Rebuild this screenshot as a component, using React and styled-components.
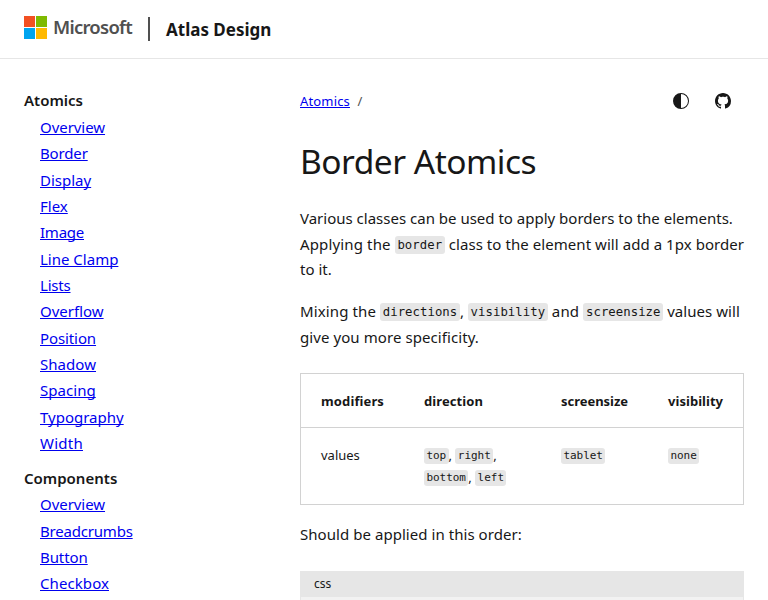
import React from "react";
import styled, { createGlobalStyle } from "styled-components";

const Global = createGlobalStyle`
  * { box-sizing: border-box; }
  html, body { margin: 0; height: 600px; overflow: hidden; background: #fff; }
  body { font-family: "Noto Sans", "Open Sans", sans-serif; font-size: 15px; color: #171717; }
`;

const Header = styled.header`
  display: flex;
  align-items: center;
  height: 59px;
  padding-left: 24px;
  border-bottom: 1px solid #e6e6e6;
`;
const Logo = styled.svg`
  width: 23px;
  height: 23px;
  margin-top: -4px;
`;
const Wordmark = styled.span`
  width: 80px;
  margin: -4px 15px 0 6px;
  font-size: 18.5px;
  font-weight: 600;
  line-height: 24px;
  letter-spacing: -0.75px;
  white-space: nowrap;
  color: #505050;
`;
const Divider = styled.span`
  width: 2px;
  height: 24px;
  background: #505050;
`;
const SiteName = styled.a`
  margin: 1px 0 0 16px;
  font-size: 17px;
  font-weight: 700;
  line-height: 24px;
  white-space: nowrap;
`;
const Layout = styled.div`
  display: grid;
  grid-template-columns: 276px 444px;
  height: 541px;
  padding-left: 24px;
  overflow: hidden;
`;
const Sidebar = styled.nav`
  padding-top: 28px;
`;
const Group = styled.section`
  margin-bottom: 7.8px;
`;
const GroupTitle = styled.h2`
  margin: 0;
  padding: 0.35px 0 0.15px;
  font-size: 15px;
  font-weight: 600;
  line-height: 26.5px;
`;
const NavList = styled.ul`
  margin: 0;
  padding: 0 0 0 16px;
  list-style: none;
`;
const NavItem = styled.li`
  height: 26.35px;
  line-height: 26.35px;
`;
const Link = styled.a`
  color: #0000ee;
  letter-spacing: ${(p) => p.$track || 0}px;
  text-decoration: underline 1px;
  text-underline-offset: 1px;
  text-decoration-skip-ink: none;
`;
const Main = styled.main`
  padding-top: 28px;
`;
const TopRow = styled.div`
  display: flex;
  align-items: center;
  height: 28px;
  font-size: 13px;
`;
const Slash = styled.span`
  flex: 1;
  margin-left: 7.5px;
  color: #505050;
`;
const ActionIcon = styled.svg`
  width: 16px;
  height: 16px;
  margin-right: ${(p) => p.$gap}px;
  fill: #171717;
`;
const Title = styled.h1`
  margin: 23px 0 0;
  font-size: 33.5px;
  font-weight: 400;
  line-height: 46px;
  letter-spacing: -0.5px;
  white-space: nowrap;
`;
const Paragraph = styled.p`
  margin: ${(p) => p.$top}px 0 0;
  line-height: 25.6px;
`;
const Line = styled.span`
  display: block;
  height: 25.6px;
  white-space: pre;
`;
const Run = styled.span`
  letter-spacing: ${(p) => p.$track || 0}px;
`;
const Code = styled.code`
  display: inline-block;
  height: ${(p) => (p.$small ? 16 : 18)}px;
  padding: 0 ${(p) => (p.$small ? 2.4 : 2.7)}px;
  border-radius: 3px;
  background: #e6e6e6;
  font-family: "DejaVu Sans Mono", monospace;
  font-size: ${(p) => (p.$small ? 11 : 12.3)}px;
  line-height: ${(p) => (p.$small ? 16 : 18)}px;
  letter-spacing: ${(p) => (p.$small ? -0.03 : 0.05)}px;
  vertical-align: 1px;
`;
const Table = styled.div`
  margin-top: 22.6px;
  border: 1px solid #d2d2d2;
  font-size: 13px;
`;
const TableRow = styled.div`
  display: grid;
  grid-template-columns: 103px 137px 107px 1fr;
  height: ${(p) => (p.$head ? 54 : 76)}px;
  padding: 16px 0 0 20px;
  border-bottom: ${(p) => (p.$head ? "1px solid #d2d2d2" : "0")};
  font-weight: ${(p) => (p.$head ? 700 : 400)};
  line-height: 22px;
`;
const CellLine = styled.span`
  display: block;
  height: 22px;
  white-space: pre;
`;
const CodeBlock = styled.div`
  height: 120px;
  margin-top: 23px;
  border: 1px solid #e6e6e6;
  background: #f2f2f2;
`;
const CodeHeader = styled.div`
  height: 25px;
  padding-left: 13px;
  background: #e6e6e6;
  font-size: 12px;
  line-height: 23px;
`;

const NAV = [
  ["Atomics", [["Overview", -0.05], ["Border", -0.15], ["Display"], ["Flex"], ["Image", -0.24], ["Line Clamp"], ["Lists", -0.2], ["Overflow"], ["Position", -0.1], ["Shadow", 0.05], ["Spacing", 0.04], ["Typography"], ["Width", 0.25]]],
  ["Components", [["Overview", -0.05], ["Breadcrumbs", -0.2], ["Button", -0.08], ["Checkbox", 0.08]]],
];

export default function App() {
  return (
    <>
      <Global />
      <Header>
        <Logo viewBox="0 0 23 23">
          <path fill="#f25022" d="M0 0h11v11H0z" />
          <path fill="#7fba00" d="M12 0h11v11H12z" />
          <path fill="#00a4ef" d="M0 12h11v11H0z" />
          <path fill="#ffb900" d="M12 12h11v11H12z" />
        </Logo>
        <Wordmark>Microsoft</Wordmark>
        <Divider />
        <SiteName>Atlas Design</SiteName>
      </Header>
      <Layout>
        <Sidebar>
          {NAV.map(([title, items]) => (
            <Group key={title}>
              <GroupTitle>{title}</GroupTitle>
              <NavList>
                {items.map(([label, track]) => (
                  <NavItem key={label}><Link $track={track}>{label}</Link></NavItem>
                ))}
              </NavList>
            </Group>
          ))}
        </Sidebar>
        <Main>
          <TopRow>
            <Link $track={0.16}>Atomics</Link>
            <Slash>/</Slash>
            <ActionIcon $gap={26} viewBox="0 0 16 16">
              <path d="M8 0a8 8 0 1 0 0 16A8 8 0 0 0 8 0Zm0 15V1a7 7 0 0 1 0 14Z" />
            </ActionIcon>
            <ActionIcon $gap={13} viewBox="0 0 16 16">
              <path d="M8 0C3.58 0 0 3.58 0 8c0 3.54 2.29 6.53 5.47 7.59.4.07.55-.17.55-.38 0-.19-.01-.82-.01-1.49-2.01.37-2.53-.49-2.69-.94-.09-.23-.48-.94-.82-1.13-.28-.15-.68-.52-.01-.53.63-.01 1.08.58 1.23.82.72 1.21 1.87.87 2.33.66.07-.52.28-.87.51-1.07-1.78-.2-3.64-.89-3.64-3.95 0-.87.31-1.59.82-2.15-.08-.2-.36-1.02.08-2.12 0 0 .67-.21 2.2.82.64-.18 1.32-.27 2-.27s1.36.09 2 .27c1.53-1.04 2.2-.82 2.2-.82.44 1.1.16 1.92.08 2.12.51.56.82 1.27.82 2.15 0 3.07-1.87 3.75-3.65 3.95.29.25.54.73.54 1.48 0 1.07-.01 1.93-.01 2.2 0 .21.15.46.55.38A8.01 8.01 0 0 0 16 8c0-4.42-3.58-8-8-8Z" />
            </ActionIcon>
          </TopRow>
          <Title>Border Atomics</Title>
          <Paragraph $top={22}>
            <Line><Run>Various classes can be used to apply borders to the elements.</Run></Line>
            <Line><Run $track={0.14}>Applying the </Run><Code>border</Code><Run $track={0.06}> class to the element will add a 1px border</Run></Line>
            <Line>to it.</Line>
          </Paragraph>
          <Paragraph $top={16.4}>
            <Line><Run $track={0.12}>Mixing the </Run><Code>directions</Code>, <Code>visibility</Code><Run $track={0.15}> and </Run><Code>screensize</Code><Run $track={0.05}> values will</Run></Line>
            <Line><Run $track={0.08}>give you more specificity.</Run></Line>
          </Paragraph>
          <Table>
            <TableRow $head>
              <Run $track={0.12}>modifiers</Run>
              <Run $track={0.08}>direction</Run>
              <Run $track={-0.03}>screensize</Run>
              <Run $track={0.04}>visibility</Run>
            </TableRow>
            <TableRow>
              <span>values</span>
              <div>
                <CellLine><Code $small>top</Code>, <Code $small>right</Code>,</CellLine>
                <CellLine><Code $small>bottom</Code>, <Code $small>left</Code></CellLine>
              </div>
              <CellLine><Code $small>tablet</Code></CellLine>
              <CellLine><Code $small>none</Code></CellLine>
            </TableRow>
          </Table>
          <Paragraph $top={17}>
            <Line><Run $track={0.05}>Should be applied in this order:</Run></Line>
          </Paragraph>
          <CodeBlock><CodeHeader>css</CodeHeader></CodeBlock>
        </Main>
      </Layout>
    </>
  );
}
